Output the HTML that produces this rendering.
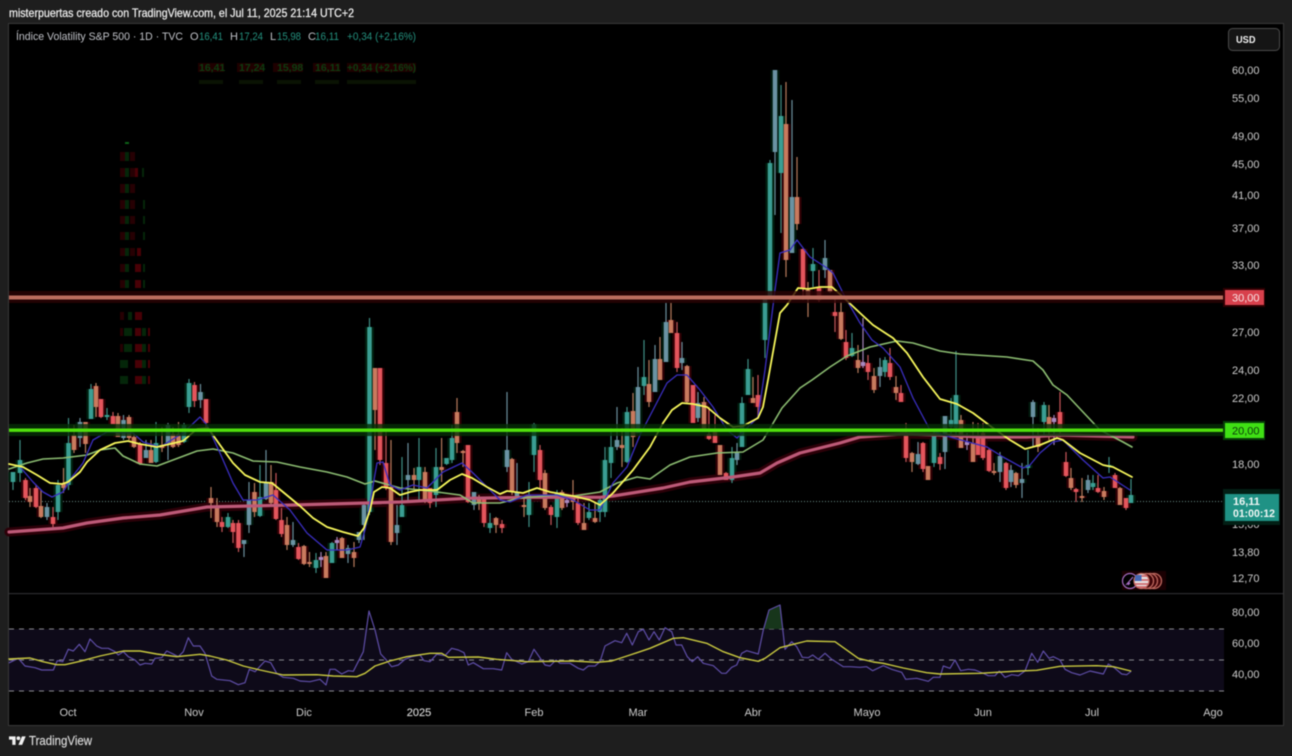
<!DOCTYPE html>
<html lang="es">
<head>
<meta charset="utf-8">
<title>Índice Volatility S&amp;P 500</title>
<style>
html,body{margin:0;padding:0;background:#1e1e1e;width:1292px;height:756px;overflow:hidden}
svg{display:block;font-family:"Liberation Sans",Arial,sans-serif;filter:blur(.4px)}
.ax{fill:#cdcdcd;font-size:11px}
.t{fill:#cdcdcd;font-size:11px;text-anchor:middle}
.w{fill:none;stroke-width:1.2}
.b{fill:none;stroke-width:4.5}
.h{fill:none;stroke-width:9}
.ma{fill:none;stroke-linejoin:round;stroke-linecap:round}
</style>
</head>
<body>
<svg width="1292" height="756" viewBox="0 0 1292 756" xmlns="http://www.w3.org/2000/svg">
<defs>
<path id="bT" d="M13 472V482M20 460V473M58 485V512M68.5 443V485M91 389V419M107 415V417M156 443V462M184 425V442M189 383V407M228 517V527M260 497V516M316 560V568M332 543V563M369.5 327V512M402 505V517M419 467V480M436 467V495M446.6 458V464M452 438V460M490 523V528M529 495V515M534 424V455M557 493V517M589 512V518M600 500V512M605 460V512M611 447V463M627 412V462M644 377V386M732 458V480M742 403V447M748 369V395M765 298V340M770 163V297M781 116V173M813 264V271M852 348V356M885 360V372M934 433V463M951 420V427M956 395V428M1028 465V468M1044 405V422M1093 483V487M1109 465V467M1131 495V503"/>
<path id="bG" d="M47 507V517M80 422V438M123.5 420V438M146 450V458M168 425V443M200.5 392V400M244 540V544M249 500V525M266 482V499M293 540V545M348 548V554M359 532V540M364 505V525M397 525V533M408 475V480M474 492V505M507 450V467M517 492V497M617 440V447M638 387V433M655 359V392M666 322V362M682 358V363M698 403V418M737 453V460M775 70V152M792 197V253M825 258V270M880 367V376M918 454V464M945 416V452M1000 456V472M1011 470V482M1022 479V483M1033 402V417M1088 480V490"/>
<path id="bR" d="M25.5 480V498M36 488V507M53 517V524M101 399V417M113 416V424M140 444V464M194.5 385V401M206 399V423M222 522V527M233 523V532M238.5 523V548M276 490V519M281.5 520V534M298.5 547V559M380 368V460M386 463V487M430 488V503M468 445V502M484 497V523M502 524V528M540 450V480M551 507V515M578 503V523M677 333V368M693 385V423M709 434V439M715 432V443M726 473V480M758 395V407M803 249V288M819 288V300M835 312V316M846 342V358M868 363V372M890 363V377M901 393V402M906 433V458M923 443V469M940 457V464M978 435V455M983 433V458M989 450V471M1006 463V488M1060 412V432M1066 462V476M1076 489V492M1098 488V492M1115 475V488M1126 498V508"/>
<path id="bO" d="M30 496V502M41 506V517M63.5 483V488M74 435V450M85.5 422V444M96 386V407M118 416V437M129 417V438M134 437V447M151 450V463M162 445V448M173 434V447M178.5 434V445M211 498V503M217 507V522M254.5 492V512M271 482V503M287 525V545M304 546V564M309.5 562V564M326 556V578M342 538V558M354 552V558M375 368V410M391 487V542M414 475V480M425 472V500M441.6 467V470M457 412V443M463 451V453M479 497V503M496 518V525M512 459V492M524 505V507M545 473V508M562 492V508M573 497V502M584 523V530M595 518V522M622 445V448M633 411V437M649 384V402M660 359V380M671 320V333M687 366V402M704 402V432M720 445V475M753 398V403M786 124V260M797 197V224M808 290V297M830 270V292M841 312V339M858 360V368M874 376V390M896 387V393M912 453V462M928 466V480M961 420V448M973 443V462M994 471V473M1016 473V485M1038 435V447M1049 417V430M1071 478V488M1082 496V498M1104 491V497M1120 488V505"/>
<path id="bP" d="M321 557V560M337 540V543M567 500V503M863 362V366M967 442V445M1054 418V422"/>
</defs>

<!-- frame -->
<rect x="0" y="0" width="1292" height="756" fill="#1e1e1e"/>
<rect x="8.5" y="23.5" width="1275" height="702" fill="#000" stroke="#383838"/>
<text x="9" y="17" fill="#f0f0f0" stroke="#f0f0f0" stroke-width=".25" font-size="12" textLength="345" lengthAdjust="spacingAndGlyphs">misterpuertas creado con TradingView.com, el Jul 11, 2025 21:14 UTC+2</text>

<!-- ghost legend -->
<g>
<path d="M198 63h26v9h-26zM237 63h27v9h-27zM273 63h30v9h-30zM313 63h27v9h-27zM347 63h69v9h-69z" fill="#1f0000"/>
<text x="199" y="71" fill="#0b3d10" font-size="10.5" font-weight="bold">16,41</text>
<text x="239" y="71" fill="#0b3d10" font-size="10.5" font-weight="bold">17,24</text>
<text x="277" y="71" fill="#0b3d10" font-size="10.5" font-weight="bold">15,98</text>
<text x="315" y="71" fill="#0b3d10" font-size="10.5" font-weight="bold">16,11</text>
<text x="347" y="71" fill="#0b3d10" font-size="10.5" font-weight="bold" textLength="69" lengthAdjust="spacingAndGlyphs">+0,34 (+2,16%)</text>
<path d="M199 80h24v4h-24zM239 80h24v4h-24zM277 80h24v4h-24zM315 80h24v4h-24zM347 80h69v4h-69z" fill="#0a1303"/>
</g>

<!-- ghost column -->
<g opacity=".8">
<path fill="#300004" d="M120 152h5v9h-5zM130 152h5v9h-5zM120 168h5v9h-5zM130 168h5v9h-5zM120 184h5v9h-5zM130 184h5v9h-5zM120 200h5v9h-5zM130 200h5v9h-5zM120 216h5v8h-5zM130 216h5v8h-5zM120 232h5v8h-5zM130 232h5v8h-5zM120 248h5v8h-5zM130 248h5v8h-5zM120 264h5v8h-5zM120 280h5v8h-5zM120 312h4v8h-4zM120 328h3v8h-3zM120 344h3v8h-3z"/>
<path fill="#5a0008" d="M135 168h3v9h-3zM137 248h4v8h-4zM135 264h6v8h-6zM135 280h6v8h-6zM135 312h7v8h-7zM135 328h6v8h-6zM135 344h7v8h-7zM135 360h7v8h-7zM135 376h7v8h-7zM148 328h2v8h-2zM148 344h2v8h-2zM148 360h2v8h-2zM148 376h2v8h-2z"/>
<path fill="#06300c" d="M125 152h4v9h-4zM125 168h4v9h-4zM125 184h4v9h-4zM125 200h4v9h-4zM125 216h4v8h-4zM125 232h4v8h-4zM125 248h4v8h-4zM125 264h4v8h-4zM125 280h4v8h-4zM128 312h4v8h-4zM124 328h8v8h-8zM124 344h8v8h-8zM120 360h8v8h-8zM120 376h8v8h-8zM142 168h2v9h-2zM143 200h2v9h-2zM143 216h2v8h-2zM143 232h2v8h-2zM143 264h2v8h-2zM143 280h2v8h-2zM142 328h4v8h-4zM142 344h4v8h-4zM142 360h4v8h-4zM142 376h4v8h-4z"/>
<path fill="#0f7a1c" d="M125 142h4v2h-4z"/>
</g>

<!-- dotted price line -->
<path d="M9 501.5H1225" stroke="#6c8f8a" stroke-width="1" stroke-dasharray="1 2"/>

<!-- halos -->
<g class="h">
<use href="#bR" stroke="#300004"/>
<use href="#bO" stroke="#300004"/>
<use href="#bP" stroke="#1d0004"/>
<use href="#bT" stroke="#00200f"/>
<use href="#bG" stroke="#00180c"/>
</g>

<!-- pink MA halo -->
<path d="M9 532 63 528 87 523 123 518 160 515 207 507 250 506 293 505 400 502 467 498.3 533 497.3 600 497.3 613 496 663 488 690 482 733 477 760 473 777 463 800 453 840 443 860 437 903 434 940 435 980 437 1027 437 1060 435 1133 437" class="ma" stroke="#2c0008" stroke-width="9" stroke-linecap="butt" fill="none"/>

<!-- wicks -->
<path class="w" stroke="#3f8f84" d="M13 472V490M20 440V482M58 480V520M68.5 418V490M91 384V419M107 408V420M156 422V463M184 423V443M189 379V413M228 513V528M260 465V517M316 553V573M332 542V563M369.5 318V515M402 457V517M419 438V500M436 448V507M446.6 458V465M452 425V463M490 513V533M529 482V527M534 423V472M557 490V528M589 503V520M600 497V522M605 447V517M611 428V478M627 407V463M644 340V395M732 447V483M742 397V447M748 359V395M765 298V358M770 160V297M781 85V233M813 248V287M852 333V357M885 357V377M934 430V467M951 398V437M956 351V437M1028 450V475M1044 402V435M1093 475V490M1109 457V473M1131 479V503"/>
<path class="w" stroke="#6b8f9c" d="M47 503V520M80 418V447M123.5 415V440M146 440V458M168 423V460M200.5 384V408M244 540V557M249 482V533M266 450V500M293 522V547M348 545V563M359 532V543M364 503V540M397 505V545M408 443V500M474 492V510M507 392V472M517 463V497M617 407V450M638 367V433M655 345V392M666 303V362M682 342V370M698 392V422M737 443V465M775 70V215M792 100V253M825 240V278M880 358V387M918 442V465M945 417V469M1000 452V482M1011 465V487M1022 463V498M1033 400V447M1088 475V493"/>
<path class="w" stroke="#c8565a" d="M25.5 478V500M36 485V508M53 507V527M101 399V418M113 412V424M140 442V465M194.5 382V407M206 399V427M222 517V532M233 520V543M238.5 520V552M276 473V520M281.5 508V537M298.5 543V560M380 368V465M386 430V490M430 488V508M468 445V503M484 497V527M502 520V533M540 445V490M551 505V525M578 498V525M677 322V372M693 385V423M709 407V440M715 415V443M726 472V480M758 375V418M803 248V300M819 270V302M835 297V332M846 330V360M868 355V380M890 348V380M901 385V402M906 423V462M923 442V472M940 453V470M978 423V455M983 423V460M989 448V472M1006 462V490M1060 392V437M1066 452V477M1076 488V502M1098 475V493M1115 473V488M1126 498V510"/>
<path class="w" stroke="#b57a5c" d="M30 488V507M41 490V518M63.5 468V493M74 425V453M85.5 422V453M96 383V417M118 413V437M129 415V440M134 433V448M151 440V463M162 427V452M173 427V448M178.5 422V447M211 487V518M217 498V527M254.5 483V517M271 465V505M287 517V550M304 545V565M309.5 552V567M326 552V578M342 537V558M354 542V567M375 368V450M391 440V545M414 468V490M425 467V503M441.6 438V482M457 398V453M463 450V467M479 495V510M496 517V533M512 458V495M524 497V517M545 470V510M562 490V510M573 480V510M584 503V530M595 503V523M622 428V467M633 393V447M649 360V407M660 337V380M671 303V333M687 365V403M704 397V432M720 445V475M753 377V403M786 82V277M797 157V230M808 282V317M830 270V293M841 302V340M858 345V373M874 368V393M896 376V400M912 452V472M928 467V480M961 415V448M973 422V462M994 463V475M1016 472V488M1038 428V452M1049 405V440M1071 468V490M1082 478V502M1104 487V500M1120 487V505"/>
<path class="w" stroke="#a583b8" d="M321 552V567M337 537V550M567 497V507M863 318V368M967 433V450M1054 415V445"/>

<!-- bodies -->
<g class="b">
<use href="#bT" stroke="#3a9e93"/>
<use href="#bG" stroke="#6a93a3"/>
<use href="#bR" stroke="#e4555c"/>
<use href="#bO" stroke="#c97a5e"/>
<use href="#bP" stroke="#a988c0"/>
</g>

<!-- pink MA -->
<polyline class="ma" stroke="#bd5a78" stroke-width="3.2" points="9 532 63 528 87 523 123 518 160 515 207 507 250 506 293 505 400 502 467 498.3 533 497.3 600 497.3 613 496 663 488 690 482 733 477 760 473 777 463 800 453 840 443 860 437 903 434 940 435 980 437 1027 437 1060 435 1133 437"/>
<!-- light green MA -->
<polyline class="ma" stroke="#8cbd72" stroke-width="1.6" points="9 469 27 463 43 459 63 458 87 455 100 450 115 448 123 456 140 464 157 466 173 460 197 451 213 449 233 453 253 461 277 462 300 467 327 472 347 477 365 484 375 481 400 488 420 490 437 492 460 495 473 503 500 503 520 498 557 495 573 496 600 492 617 483 637 477 650 479 670 465 690 457 717 453 743 452 763 440 772 425 782 408 800 388 812 380 830 367 847 356 870 347 897 341 913 343 940 351 960 354 1007 357 1033 361 1043 370 1053 385 1067 395 1083 412 1100 430 1123 442 1132 447"/>
<!-- blue MA -->
<polyline class="ma" stroke="#3a2ec0" stroke-width="1.3" points="21 468 33 482 43 492 52 497 63 492 72 477 83 463 93 440 107 432 133 433 143 442 160 447 183 433 200 417 207 425 220 453 233 483 243 500 257 500 273 495 290 510 307 533 327 550 347 550 360 547 365 530 370 503 377 463 383 462 390 485 400 490 413 485 427 488 443 472 462 463 473 473 487 487 500 500 510 502 527 495 557 495 573 500 590 510 600 510 613 483 627 467 640 435 653 410 667 383 677 375 687 375 700 390 713 407 727 430 737 438 750 425 758 417 765 370 775 290 780 253 790 250 797 240 810 257 827 268 833 273 845 297 860 323 872 340 883 348 900 367 913 398 930 430 950 437 987 447 1003 457 1023 468 1030 465 1040 453 1053 442 1063 440 1083 460 1103 478 1110 477 1130 490"/>
<!-- yellow MA -->
<polyline class="ma" stroke="#f7f75c" stroke-width="1.8" points="9 464 23 467 37 475 50 483 62 484 68 482 80 472 87 462 100 450 115 443 128 441 140 444 157 447 170 444 183 441 197 429 208 428 220 445 233 463 245 475 260 482 272 483 283 492 300 506 313 518 327 527 343 532 358 536 364 528 370 510 374 492 382 487 390 488 400 495 410 492 420 490 437 490 450 480 462 474 472 478 487 487 500 494 507 491 523 493 537 488 550 492 573 496 590 500 600 505 613 493 633 470 650 447 663 423 672 410 682 403 693 404 707 407 720 418 733 427 743 426 758 418 763 407 768 380 780 313 787 305 798 288 808 289 820 287 832 287 843 297 860 313 873 325 893 338 907 353 923 377 940 399 957 404 973 413 993 428 1010 440 1025 449 1040 445 1057 438 1063 440 1080 453 1103 465 1113 467 1132 477"/>

<!-- horizontal levels -->
<rect x="9" y="291" width="1216" height="12" fill="#2a0304" opacity=".8"/>
<rect x="9" y="295.5" width="1216" height="4" fill="#bb6d5e"/>
<rect x="9" y="424" width="1216" height="12" fill="#052e06" opacity=".8"/>
<rect x="9" y="428.5" width="1216" height="3.4" fill="#50e00c"/>

<!-- event icons -->
<rect x="1122" y="571" width="44" height="19" fill="#1a0002"/>
<circle cx="1130" cy="581" r="7.5" fill="#000" stroke="#a56cc1" stroke-width="1.2"/>
<path d="M1133 577l-6 7 3-1-2 2" fill="none" stroke="#a56cc1" stroke-width="1.2"/>
<circle cx="1154" cy="581" r="7.5" fill="#400508" stroke="#c06a60" stroke-width="1.3"/>
<circle cx="1150" cy="581" r="7.5" fill="#400508" stroke="#c06a60" stroke-width="1.3"/>
<circle cx="1146" cy="581" r="7.5" fill="#400508" stroke="#c06a60" stroke-width="1.3"/>
<circle cx="1141.5" cy="581" r="7.5" fill="#e6dede" stroke="#c06a60" stroke-width="1.3"/>
<path d="M1135.5 576h12M1134.5 580h14M1134.5 584h14M1136.5 587h10" stroke="#cc5a60" stroke-width="1.4"/>
<path d="M1135.5 575h6v6h-7z" fill="#4668b5"/>

<!-- pane separator -->
<rect x="9" y="593" width="1274" height="1.2" fill="#2b2b2f"/>

<!-- RSI pane -->
<rect x="9" y="629" width="1215" height="62" fill="#0e0a19"/>
<path d="M9 629H1224M9 660H1224M9 691H1224" stroke="#8a8a8f" stroke-width="1" stroke-dasharray="5 5"/>
<path d="M763 629 769 610 780 605 782 629Z" fill="#17361b"/>
<polyline class="ma" stroke="#5f4ea8" stroke-width="1.2" points="9.3 662.7 18.3 658.3 25 666 35 667.7 41.7 670 53.3 670 57.3 660.7 62.7 661.7 68.3 649.3 73.3 651 79.3 644.3 85 651.7 90 639 96.7 646 101.7 648.3 108.3 648.3 115 651.7 118.3 655 123.3 651.7 128.3 656.7 135 660 140 665 145 663.3 151.7 664 155 658.3 161.7 657.7 166.7 651 171.7 653.3 178.3 656.7 183.3 651.7 188.3 637.7 193.3 646 200 646 205 653.3 211.7 676 216.7 679.3 230 680.7 238.3 684.7 245 682.7 249.3 669.3 255 671.7 265 661 270.7 662.7 276.7 673.3 283.3 677.3 293.3 678.3 300 681 310 681.7 320 679.3 326 685 330 669.3 335 669.3 341.7 674 348.3 670.7 353.3 671.3 363.3 651.7 369 611 375 630 380.7 654 385.7 659.3 391.7 666.7 398.3 665 405 659.3 411.7 656.7 420 655 424 660.7 430 661.7 436.7 654.3 445 655.7 451.7 648.3 458.3 650 464 652.7 468.3 665 473.3 662.7 483.3 668.7 493.3 668.7 501.7 670 506.7 652.7 511.7 659.3 521.7 664 528.3 661.7 534 649.3 545 665 550 666 556 660 560 663.3 570 663.3 578.3 668.3 583.3 670 588.3 666 595 666 600 661.7 605 646 615 640.7 621.7 642.7 626.7 633.3 632.3 645 638.3 631.7 643.3 629.3 649 640 654 631.7 659.3 640 665 627.7 671.7 631.7 676 645 681.7 645 687.3 656.7 692.3 661.7 697.7 656.7 703.3 663.3 713.3 665.7 721.7 673.3 726 673.3 731.7 667.3 736.7 665 741.7 653.3 746.7 650.7 758.3 654 763.3 630 769 610 780 605 785 649.3 791.7 641.7 796.7 646.7 802.3 657.3 808.3 657.7 812.7 655 818.3 659.3 825 653.3 831.7 659.3 843.3 666.7 850 666.7 860 667.3 866.7 666.7 872.7 670.7 883.3 665.7 891.7 669.3 901.7 672.3 905.7 679.3 916.7 678.3 928.3 681.3 933.3 677.3 940 677.3 943.3 666 950 668.3 955 660 960.7 670.7 968.3 669.3 975 670 983.3 673.3 988.3 675.7 995 675.7 999.3 671 1005 677.3 1011.7 674.7 1018.3 675.7 1025 671 1031.7 653.3 1037.7 662.3 1043.3 651 1049 658.3 1053.3 656.7 1060 660 1065 669.3 1071.7 672.7 1080 675 1090 671 1103.3 674 1108.3 664 1115 668.3 1121.7 674 1126.7 674.7 1130.7 671.7"/>
<polyline class="ma" stroke="#c9c93f" stroke-width="1.4" points="9 659 30 658 43 661.7 56.7 664.7 65 664.7 80 661.3 100 656 123.3 651 140 651 156.7 654 176.7 656.7 200 654.3 210 656 226.7 660 243.3 666 260 670 283.3 675 316.7 674.7 333.3 676 356.7 676.7 365 673.3 375 666 390 661 406.7 656.7 430 653.3 441.7 653.3 448.3 657.3 478.3 657 496.7 659.3 526.7 661.7 573.3 661 596.7 662.3 611.7 661 630 655 650 648.3 673.3 638.3 683.3 637.7 706.7 643.3 723.3 651.7 740 657.7 758.3 661.3 765 658.3 780 647.7 793.3 644.3 806.7 641 835 641.7 858.3 658.3 873.3 662 883.3 663.3 903.3 668 926.7 672.7 940 674 980 673.3 1013.3 671.3 1036.7 670.3 1060 666.3 1096.7 665.7 1113.3 666.7 1130.7 671"/>

<!-- legend -->
<g font-size="11">
<text x="16" y="40" fill="#c0c2c8" textLength="167" lengthAdjust="spacingAndGlyphs">Índice Volatility S&amp;P 500 · 1D · TVC</text>
<text x="190" y="40" fill="#c0c2c8">O</text><text x="199" y="40" fill="#24917f" textLength="24" lengthAdjust="spacingAndGlyphs">16,41</text>
<text x="230" y="40" fill="#c0c2c8">H</text><text x="239" y="40" fill="#24917f" textLength="24" lengthAdjust="spacingAndGlyphs">17,24</text>
<text x="270" y="40" fill="#c0c2c8">L</text><text x="277" y="40" fill="#24917f" textLength="24" lengthAdjust="spacingAndGlyphs">15,98</text>
<text x="308" y="40" fill="#c0c2c8">C</text><text x="315" y="40" fill="#24917f" textLength="24" lengthAdjust="spacingAndGlyphs">16,11</text>
<text x="347" y="40" fill="#24917f" textLength="69" lengthAdjust="spacingAndGlyphs">+0,34 (+2,16%)</text>
</g>

<!-- USD button -->
<rect x="1228.5" y="28.5" width="51" height="22" rx="4" fill="#151515" stroke="#4a4a4a"/>
<text x="1236" y="43" fill="#f0f0f0" font-size="10.5" font-weight="bold" textLength="19.5" lengthAdjust="spacingAndGlyphs">USD</text>

<!-- price axis -->
<g class="ax">
<text x="1232" y="74">60,00</text>
<text x="1232" y="102">55,00</text>
<text x="1232" y="140">49,00</text>
<text x="1232" y="168">45,00</text>
<text x="1232" y="199">41,00</text>
<text x="1232" y="232">37,00</text>
<text x="1232" y="269">33,00</text>
<text x="1232" y="336">27,00</text>
<text x="1232" y="374">24,00</text>
<text x="1232" y="402">22,00</text>
<text x="1232" y="468">18,00</text>
<text x="1232" y="497">16,50</text>
<text x="1232" y="528">15,00</text>
<text x="1232" y="556">13,80</text>
<text x="1232" y="582">12,70</text>
<text x="1232" y="616">80,00</text>
<text x="1232" y="647">60,00</text>
<text x="1232" y="678">40,00</text>
</g>

<!-- labels -->
<rect x="1223" y="288" width="42" height="19" fill="#2e0003"/>
<rect x="1225" y="290" width="39" height="15" fill="#d8404c"/>
<text x="1232" y="301.5" fill="#f7e6e6" font-size="11">30,00</text>
<rect x="1223" y="421" width="42" height="19" fill="#063f07"/>
<rect x="1225" y="423" width="39" height="15" fill="#3fe014"/>
<text x="1232" y="434.5" fill="#0b3a0b" font-size="11">20,00</text>
<rect x="1223" y="489" width="57" height="36" fill="#021f15"/>
<rect x="1225" y="494" width="54" height="27" fill="#1f9285"/>
<text x="1233" y="505" fill="#f0f7f5" font-size="11" font-weight="bold">16,11</text>
<text x="1233" y="517" fill="#f0f7f5" font-size="11" textLength="42" lengthAdjust="spacingAndGlyphs" font-weight="bold">01:00:12</text>

<!-- time axis -->
<g>
<text class="t" x="68" y="716">Oct</text>
<text class="t" x="194" y="716">Nov</text>
<text class="t" x="304" y="716">Dic</text>
<text class="t" x="419" y="716" stroke="#cdcdcd" stroke-width=".2">2025</text>
<text class="t" x="534" y="716">Feb</text>
<text class="t" x="638" y="716">Mar</text>
<text class="t" x="753" y="716">Abr</text>
<text class="t" x="867" y="716">Mayo</text>
<text class="t" x="983" y="716">Jun</text>
<text class="t" x="1092" y="716">Jul</text>
<text class="t" x="1213" y="716">Ago</text>
</g>

<!-- TradingView logo -->
<g transform="translate(9 734.5) scale(.47)" fill="#f0f0f0">
<path d="M14 22H7V11H0V4h14v18zM28 22h-8l7.5-18h8L28 22z"/>
<circle cx="20" cy="8" r="4"/>
</g>
<text x="29" y="745" fill="#dcdcdc" stroke="#dcdcdc" stroke-width=".15" font-size="12.5" textLength="63" lengthAdjust="spacingAndGlyphs">TradingView</text>
</svg>
</body>
</html>
